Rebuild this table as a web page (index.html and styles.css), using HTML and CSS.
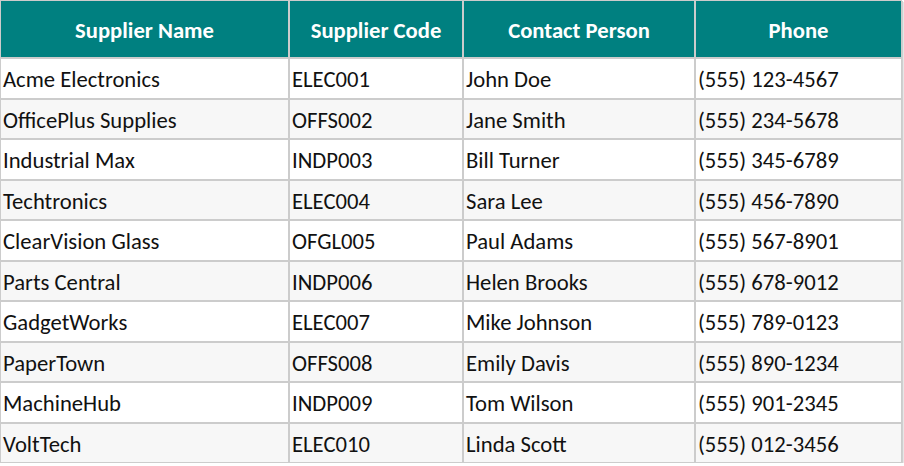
FILE: index.html
```html
<!DOCTYPE html>
<html lang="en">
<head>
<meta charset="utf-8">
<title>Suppliers</title>
<link rel="stylesheet" href="styles.css">
</head>
<body>
<table class="suppliers">
  <thead>
    <tr>
      <th class="col-name">Supplier Name</th>
      <th class="col-code">Supplier Code</th>
      <th class="col-contact">Contact Person</th>
      <th class="col-phone">Phone</th>
    </tr>
  </thead>
  <tbody>
    <tr><td>Acme Electronics</td><td>ELEC001</td><td>John Doe</td><td>(555) 123-4567</td></tr>
    <tr><td>OfficePlus Supplies</td><td>OFFS002</td><td>Jane Smith</td><td>(555) 234-5678</td></tr>
    <tr><td>Industrial Max</td><td>INDP003</td><td>Bill Turner</td><td>(555) 345-6789</td></tr>
    <tr><td>Techtronics</td><td>ELEC004</td><td>Sara Lee</td><td>(555) 456-7890</td></tr>
    <tr><td>ClearVision Glass</td><td>OFGL005</td><td>Paul Adams</td><td>(555) 567-8901</td></tr>
    <tr><td>Parts Central</td><td>INDP006</td><td>Helen Brooks</td><td>(555) 678-9012</td></tr>
    <tr><td>GadgetWorks</td><td>ELEC007</td><td>Mike Johnson</td><td>(555) 789-0123</td></tr>
    <tr><td>PaperTown</td><td>OFFS008</td><td>Emily Davis</td><td>(555) 890-1234</td></tr>
    <tr><td>MachineHub</td><td>INDP009</td><td>Tom Wilson</td><td>(555) 901-2345</td></tr>
    <tr><td>VoltTech</td><td>ELEC010</td><td>Linda Scott</td><td>(555) 012-3456</td></tr>
  </tbody>
</table>
</body>
</html>
```
FILE: styles.css
```css
html, body {
  margin: 0;
  padding: 0;
  background: #ffffff;
}

.suppliers {
  width: 902px;
  table-layout: fixed;
  border-collapse: separate;
  border-spacing: 0;
  font-family: Carlito, Lato, "Liberation Sans", sans-serif;
  font-size: 22.67px;
  line-height: 25px;
  color: #111111;
  box-shadow: 1px 1px 0 #cfcfcf, 2px 2px 0 #e6e6e6;
}

.suppliers th,
.suppliers td {
  box-sizing: border-box;
  border: 1px solid #cccccc;
}

.suppliers th {
  background: #008080;
  color: #ffffff;
  font-weight: bold;
  text-align: center;
  padding: 16.5px 2px 14.5px;
}

.suppliers td {
  text-align: left;
  padding: 8px 2px 5.5px;
  white-space: nowrap;
}

.suppliers tbody tr:nth-child(even) td {
  background: #f7f7f7;
}

.col-name { width: 289px; }
.col-code { width: 174px; }
.col-contact { width: 232px; }
.col-phone { width: 207px; }
```
